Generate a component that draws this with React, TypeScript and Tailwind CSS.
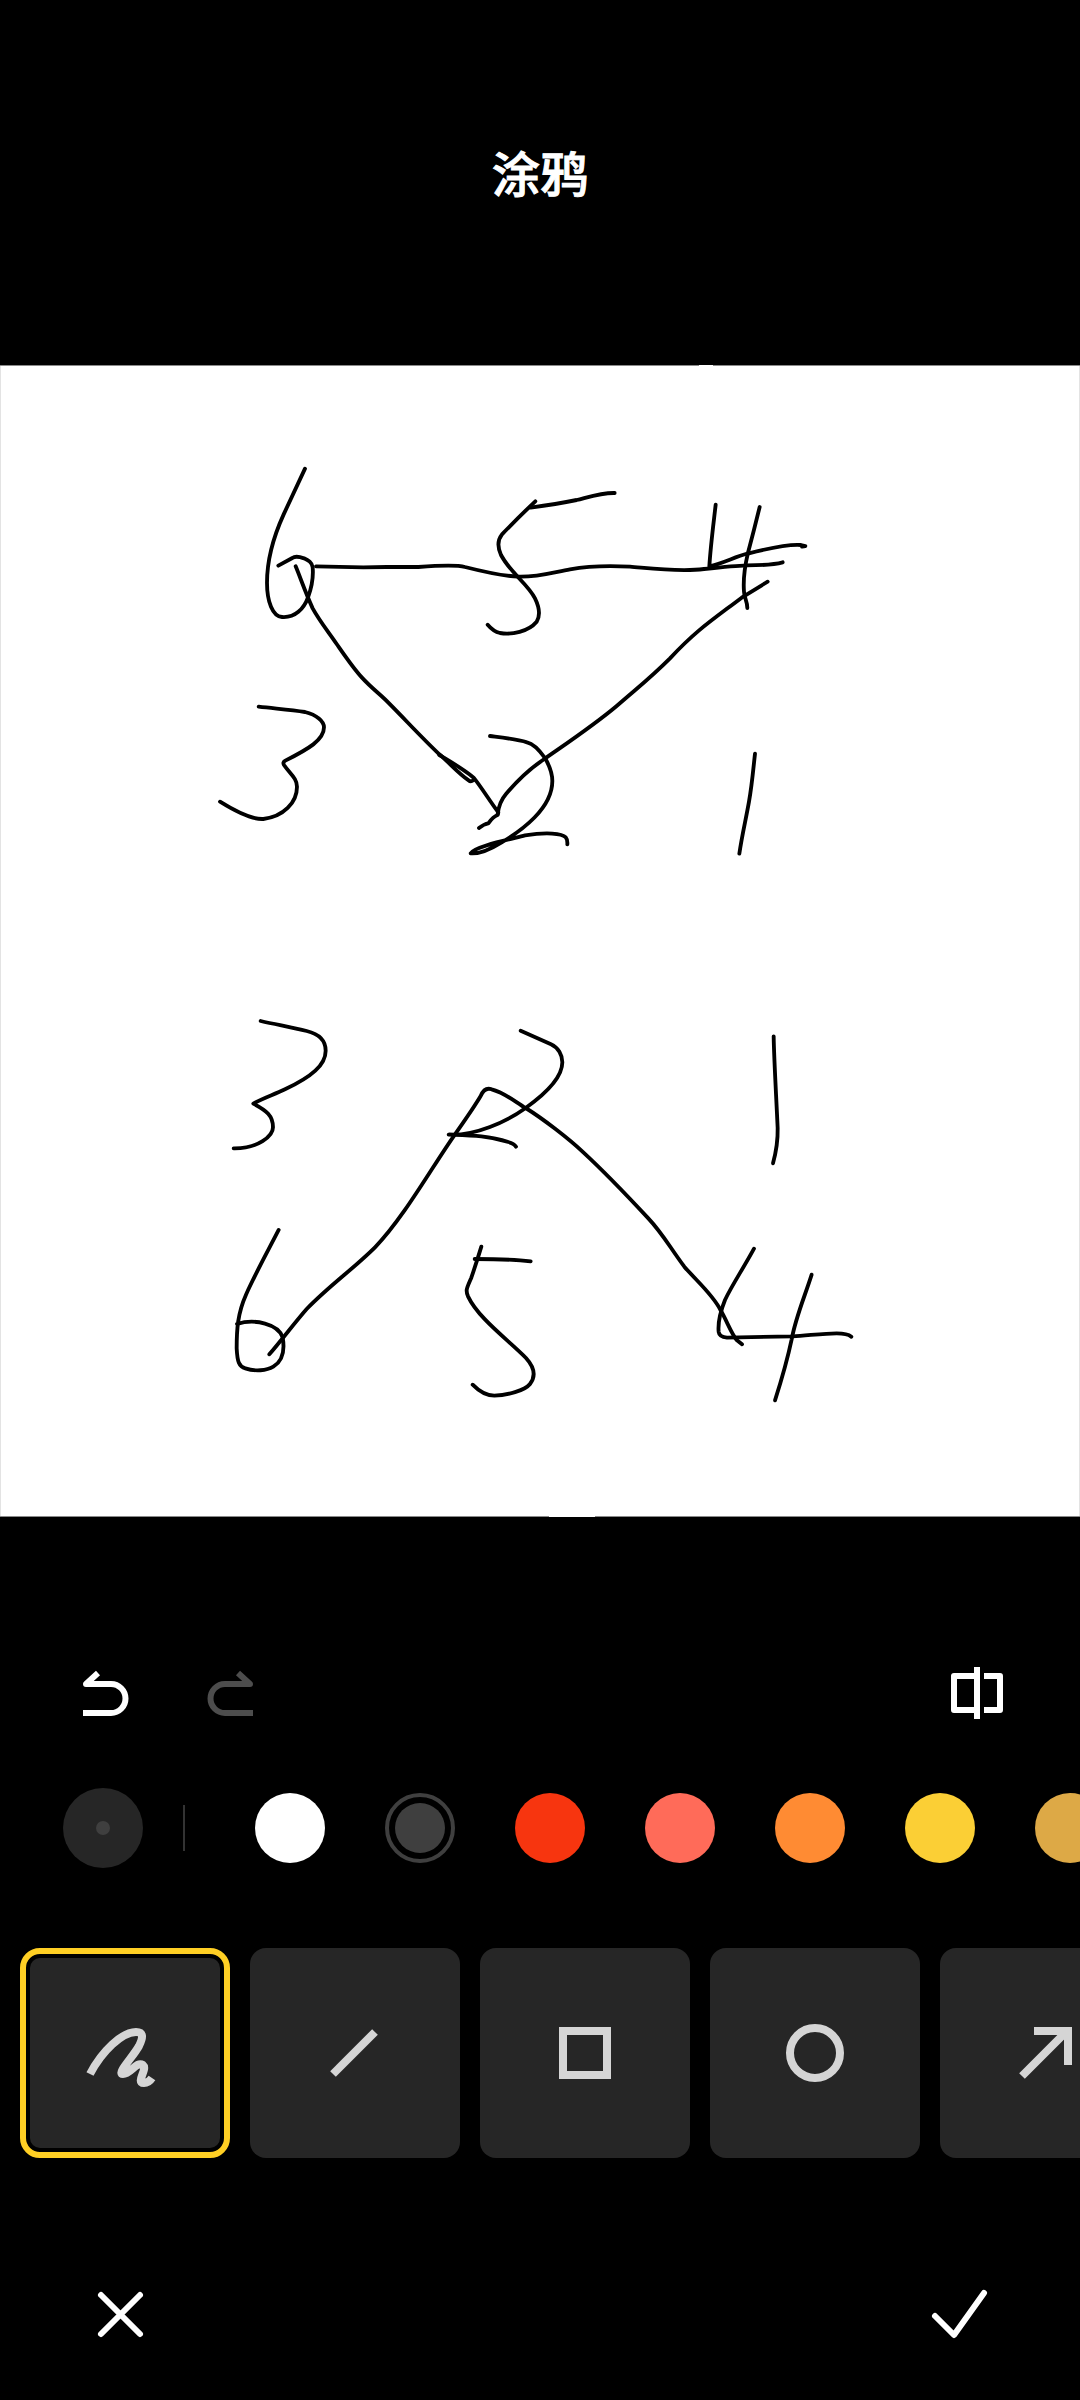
import { useState, type ReactNode } from "react";

type Sheet = { transform: string; strokes: string[] };

// Pen strokes, grouped by the quadrant of the board they belong to.
const sheets: Sheet[] = [
  {
    transform: "translate(200 75) scale(0.33333)",
    strokes: [
      "M315 86L251 223C215 302 201 365 201 428C201 485 218 529 246 531C285 534 312 506 324 472C336 440 340 405 338 382C336 366 325 361 312 355C298 350 285 348 277 354L235 377",
      "M348 379L490 382L560 381L655 381C720 376 770 374 795 381C850 395 905 408 955 410C1010 412 1060 397 1110 388C1160 379 1220 376 1290 380C1350 385 1440 397 1512 387C1560 382 1610 377 1640 376C1680 376 1715 376 1748 367",
      "M287 379C302 415 315 455 338 505C360 545 385 575 410 612C435 648 460 685 486 713C515 745 540 762 565 788C615 838 665 893 718 943C750 970 775 1000 806 1021Q812 1027 820 1021",
      "M718 945C755 967 790 987 821 1013C848 1047 869 1083 895 1117L893 1125Q880 1129 865 1150Q852 1152 837 1164",
      "M893 1122C897 1092 905 1077 918 1062C950 1024 985 989 1033 957C1100 910 1180 857 1250 798C1320 737 1350 715 1410 655C1490 570 1530 545 1625 473Q1665 448 1703 425",
      "M176 800C225 806 270 808 315 816C350 825 372 843 372 862C372 900 325 927 256 962Q247 967 252 975C270 1002 291 1014 291 1040C291 1088 250 1130 190 1137C155 1139 100 1110 60 1085",
      "M870 888C910 893 950 897 981 907C1000 911 1018 930 1035 954C1050 980 1057 1003 1057 1023C1057 1105 965 1172 905 1207C865 1232 835 1242 812 1240C820 1221 920 1200 975 1186C1040 1176 1086 1180 1097 1192Q1103 1199 1102 1213",
    ],
  },
  {
    transform: "translate(440 75) scale(0.33333)",
    strokes: [
      "M286 184C250 218 210 258 186 283C171 302 173 323 183 345C212 400 262 430 285 475C302 510 298 532 290 545C265 575 215 585 180 579Q160 574 143 554",
      "M272 203Q350 192 410 180C450 170 485 158 524 159",
      "M827 194C820 256 812 315 808 379C850 370 885 350 922 341C970 329 1040 311 1083 315L1096 318L1086 320",
      "M959 201Q943 267 924 338C913 385 910 430 912 455C913 475 922 483 922 504",
      "M945 941C940 985 936 1035 927 1085C917 1142 907 1180 898 1241",
    ],
  },
  {
    transform: "translate(200 635) scale(0.33333)",
    strokes: [
      "M182 63C230 74 275 82 320 93C362 103 377 123 377 152C377 195 335 230 255 268C220 285 190 294 160 311C200 332 219 347 219 382C219 408 175 446 101 445",
      "M236 690C200 760 165 823 138 884C113 940 110 988 110 1045C112 1085 117 1100 136 1105C165 1115 200 1112 220 1100C248 1083 255 1052 248 1012C235 972 165 955 111 972",
      "M208 1063C245 1020 285 967 320 927C390 855 462 805 525 742C610 655 700 495 763 406C795 360 820 325 842 288Q854 260 875 268C918 280 945 305 977 324C1030 357 1105 415 1150 457C1215 517 1305 612 1345 655C1390 703 1410 743 1453 800C1490 843 1540 885 1562 931C1580 962 1595 1002 1610 1020L1626 1033",
      "M844 740Q831 783 814 833C800 866 796 870 804 889C835 955 925 1020 978 1074C1005 1104 1007 1130 990 1152C974 1172 922 1186 883 1187Q850 1187 818 1154",
      "M824 777C875 777 940 778 992 784",
    ],
  },
  {
    transform: "translate(440 635) scale(0.33333)",
    strokes: [
      "M242 92L333 133C355 143 367 165 367 187C367 225 330 272 257 324C200 365 105 408 26 404C90 406 145 406 205 426Q222 430 228 440",
      "M1001 109C1002 175 1008 275 1013 384C1014 430 1005 468 999 490",
      "M942 746C910 805 876 855 855 900C837 945 834 975 836 996Q838 1011 861 1013L1058 1009C1100 1007 1150 1000 1190 1000Q1222 1000 1234 1010",
      "M1115 824C1093 893 1067 952 1055 1018C1042 1080 1026 1135 1005 1201",
    ],
  },
];

const swatches = [
  { name: "白色", fill: "bg-white" },
  { name: "深灰", fill: "bg-[#3f3f3f]" },
  { name: "红色", fill: "bg-[#f7350f]" },
  { name: "珊瑚色", fill: "bg-[#ff6b59]" },
  { name: "橙色", fill: "bg-[#ff8b33]" },
  { name: "黄色", fill: "bg-[#fbcf35]" },
  { name: "土黄", fill: "bg-[#dda946]" },
];

const tools: { name: string; icon: ReactNode }[] = [
  {
    name: "画笔",
    icon: (
      <path
        strokeLinejoin="round"
        d="M5 61C17 38 37 19 51 19C59 19 58 25 54 33C48 44 31 61 38 61C46 61 51 48 58 52C63 56 50 70 59 70C62 70 65 68 67 65"
      />
    ),
  },
  { name: "直线", icon: <path d="M18 61L60 19" /> },
  { name: "矩形", icon: <rect x="18" y="18" width="44" height="44" /> },
  { name: "圆形", icon: <circle cx="40" cy="40" r="25" /> },
  { name: "箭头", icon: <path d="M17 63L61 19M29 18H63V52" /> },
];

export default function App() {
  const [color, setColor] = useState(1);
  const [tool, setTool] = useState(0);

  return (
    <main className="flex min-h-screen flex-col overflow-hidden bg-black font-['Noto_Sans_CJK_SC',sans-serif] text-white">
      <header className="flex h-[365px] justify-center pt-[137px]">
        <h1 className="text-5xl leading-[68px] font-medium [-webkit-text-stroke:1px_white]">涂鸦</h1>
      </header>

      <svg viewBox="0 0 1080 1152" className="h-auto w-full bg-white" role="img" aria-label="涂鸦画布">
        <path d="M0.5 0V1152M1079.5 0V1152" stroke="#e3e3e3" />
        <path d="M0 0.5H699M713 0.5H1080M0 1151.5H549M595 1151.5H1080" stroke="#8a8a8a" />
        {sheets.map((sheet) => (
          <g
            key={sheet.transform}
            transform={sheet.transform}
            fill="none"
            stroke="#000"
            strokeWidth="11.5"
            strokeLinecap="round"
            strokeLinejoin="round"
          >
            {sheet.strokes.map((d) => (
              <path key={d} d={d} />
            ))}
          </g>
        ))}
      </svg>

      <div className="flex items-center pt-[140px] pr-[73px] pl-[70px]">
        <button aria-label="撤销" className="p-2">
          <svg viewBox="0 0 56 56" className="size-14" fill="none" stroke="#fff" strokeWidth="6">
            <path d="M5 48H33A14 14 0 0 0 33 19H8L20 8" strokeLinejoin="round" />
          </svg>
        </button>
        <button aria-label="重做" disabled className="ml-[52px] p-2">
          <svg viewBox="0 0 56 56" className="size-14" fill="none" stroke="#4d4d4d" strokeWidth="6">
            <path d="M51 48H23A14 14 0 0 1 23 19H48L36 8" strokeLinejoin="round" />
          </svg>
        </button>
        <button aria-label="对比" className="ml-auto">
          <svg viewBox="0 0 60 60" className="size-15" fill="none" stroke="#fff" strokeWidth="6" strokeLinejoin="round">
            <path d="M30 13H7V47H30M37 13H53V47H37M30 4V56" />
          </svg>
        </button>
      </div>

      <div className="mt-[59px] flex items-center pl-[63px]">
        <button aria-label="画笔粗细" className="flex size-20 shrink-0 items-center justify-center rounded-full bg-[#262626]">
          <span className="size-3.5 rounded-full bg-[#3f3f3f]" />
        </button>
        <span className="ml-10 h-[46px] w-0.5 shrink-0 bg-[#333333]" />
        <div className="ml-[70px] flex gap-[60px]">
          {swatches.map((s, i) => (
            <button
              key={s.name}
              aria-label={s.name}
              aria-pressed={i === color}
              onClick={() => setColor(i)}
              className={
                i === color
                  ? "flex size-[70px] shrink-0 items-center justify-center rounded-full border-4 border-[#3f3f3f]"
                  : "flex size-[70px] shrink-0 items-center justify-center rounded-full"
              }
            >
              <span className={`rounded-full ${i === color ? "size-[50px]" : "size-[70px]"} ${s.fill}`} />
            </button>
          ))}
        </div>
      </div>

      <div className="mt-20 flex gap-5 pl-5">
        {tools.map((t, i) => (
          <button
            key={t.name}
            aria-label={t.name}
            aria-pressed={i === tool}
            onClick={() => setTool(i)}
            className={
              i === tool
                ? "size-[210px] shrink-0 rounded-[20px] border-6 border-[#ffcf24] p-1"
                : "size-[210px] shrink-0"
            }
          >
            <span
              className={`flex size-full items-center justify-center bg-[#262626] ${i === tool ? "rounded-[10px]" : "rounded-2xl"}`}
            >
              <svg viewBox="0 0 80 80" className="size-20" fill="none" stroke="#d5d5d5" strokeWidth="8">
                {t.icon}
              </svg>
            </span>
          </button>
        ))}
      </div>

      <footer className="flex justify-between px-[90px] pt-[126px] pb-14">
        <button aria-label="取消">
          <svg viewBox="0 0 60 60" className="size-15" fill="none" stroke="#fff" strokeWidth="6" strokeLinecap="round">
            <path d="M11 11L50 50M50 11L11 50" />
          </svg>
        </button>
        <button aria-label="完成">
          <svg
            viewBox="0 0 60 60"
            className="size-15"
            fill="none"
            stroke="#fff"
            strokeWidth="6"
            strokeLinecap="round"
            strokeLinejoin="round"
          >
            <path d="M5 32L24 51L54 9" />
          </svg>
        </button>
      </footer>
    </main>
  );
}
